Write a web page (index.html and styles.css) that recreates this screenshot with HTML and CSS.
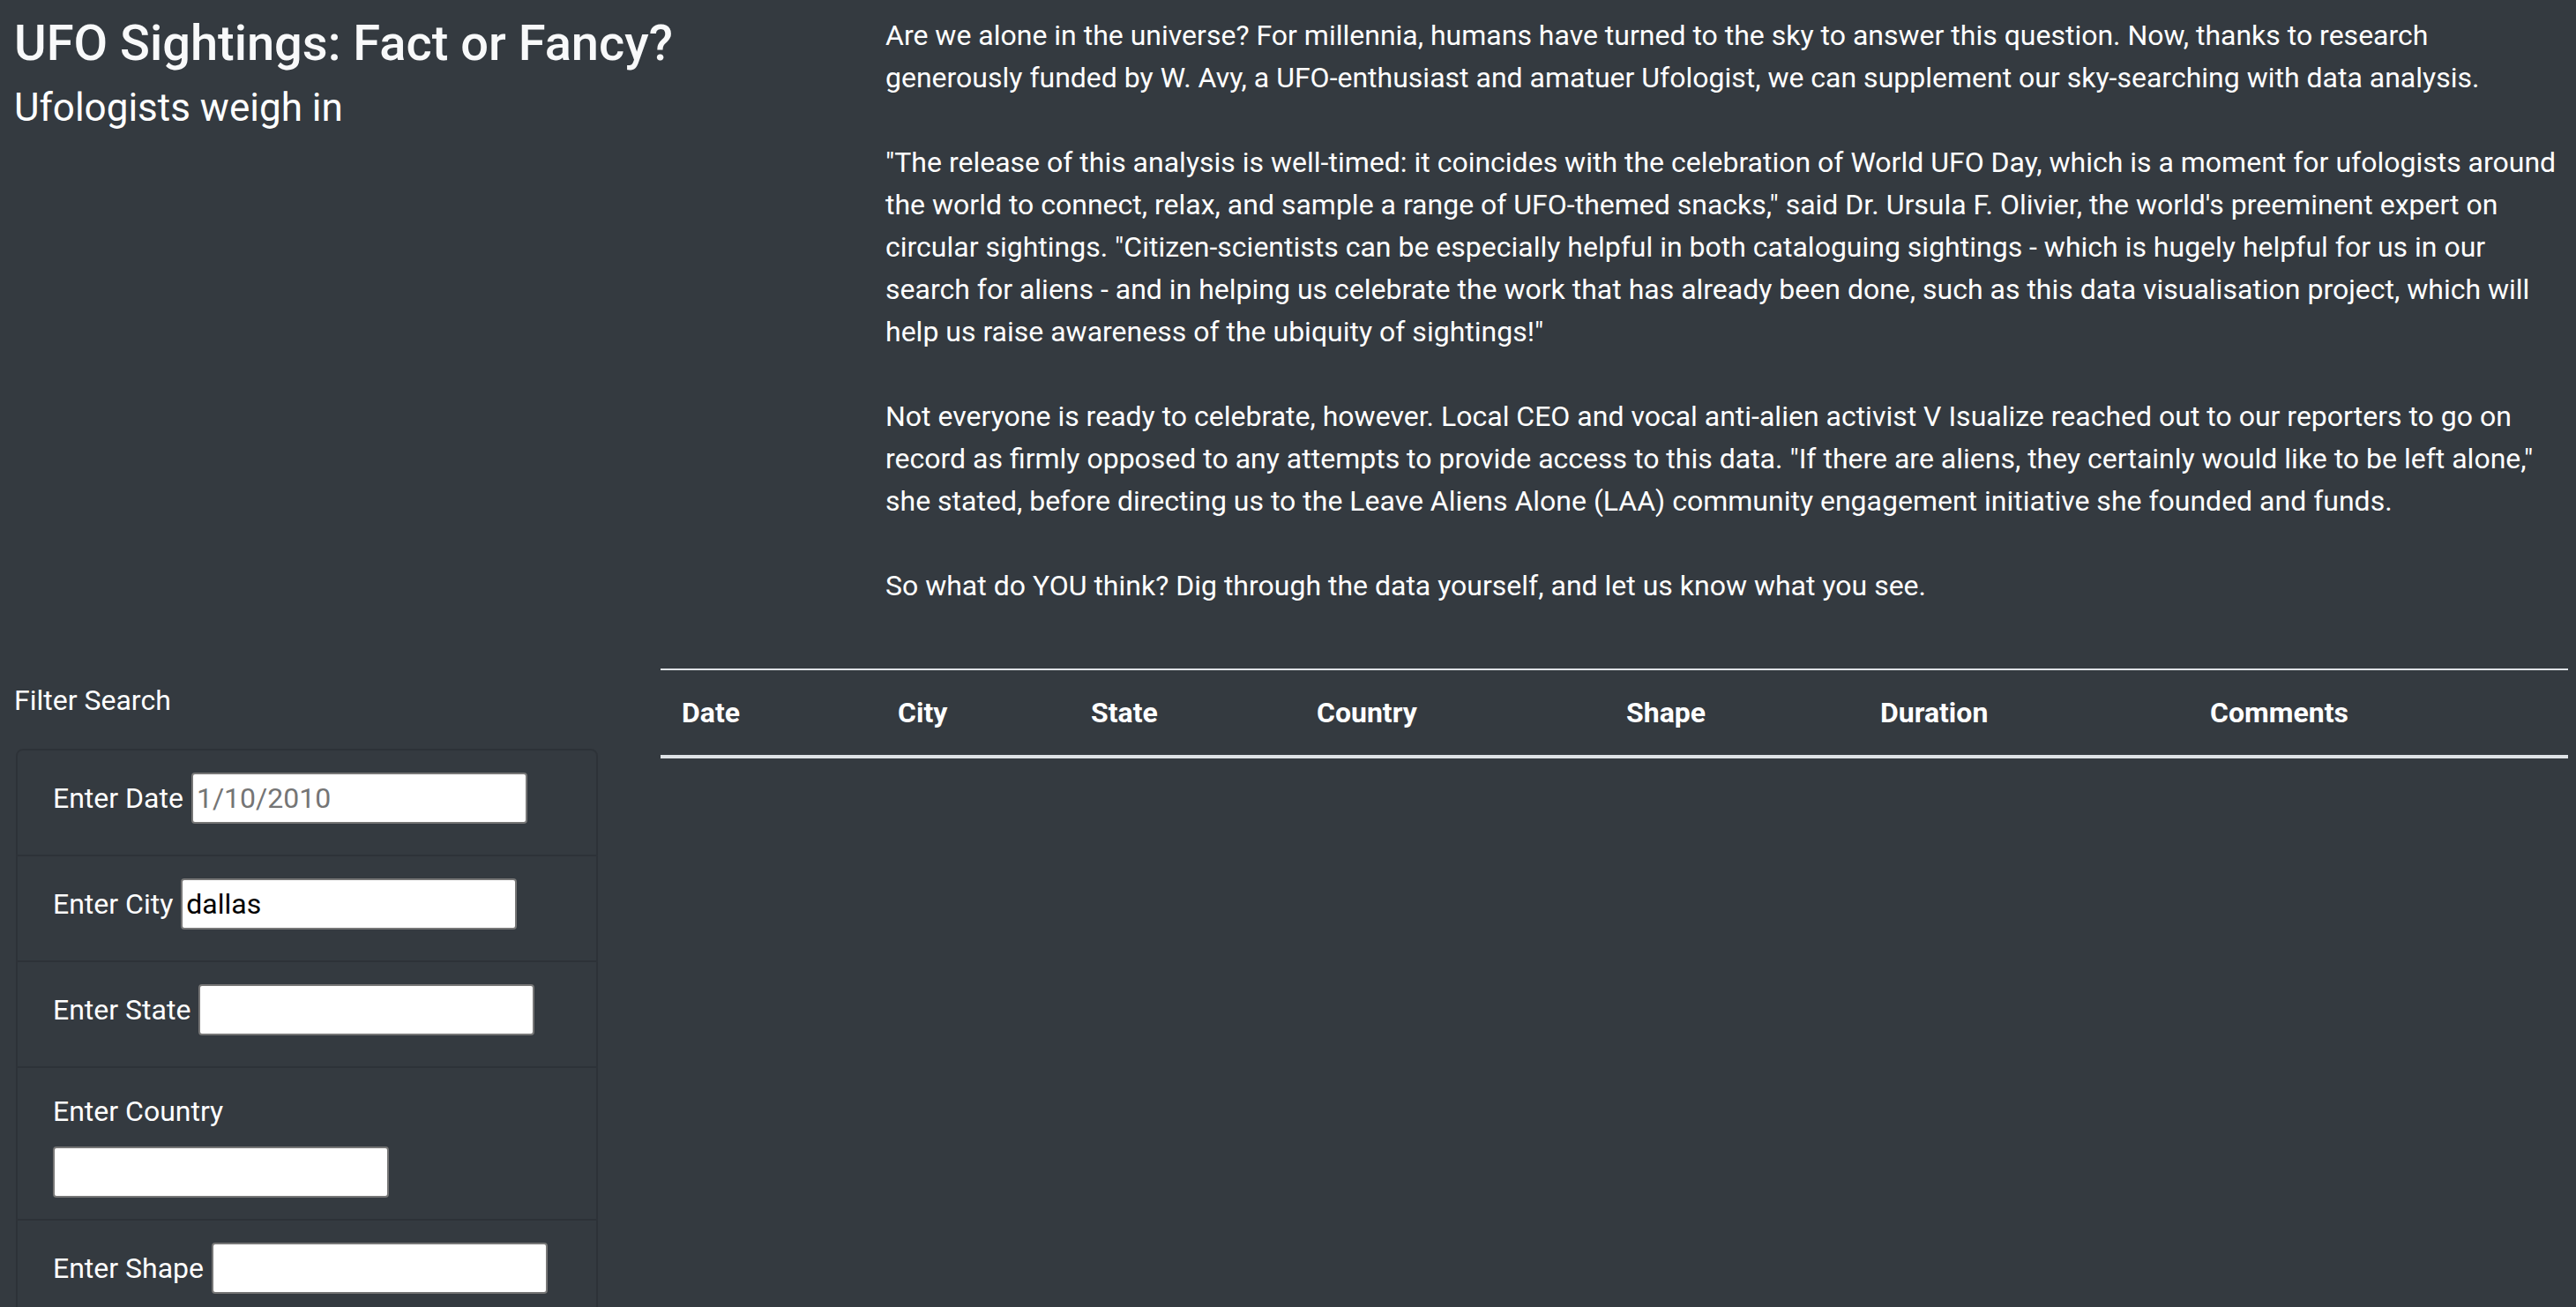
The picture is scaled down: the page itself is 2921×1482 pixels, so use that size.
FILE: index.html
```html
<!DOCTYPE html>
<html lang="en">
<head>
<meta charset="utf-8">
<title>UFO Sightings: Fact or Fancy?</title>
<link rel="stylesheet" href="styles.css">
</head>
<body>
  <header class="intro">
    <div class="intro-heading">
      <h1 class="title">UFO Sightings: Fact or Fancy?</h1>
      <h2 class="subtitle">Ufologists weigh in</h2>
    </div>
    <div class="intro-text">
      <p>Are we alone in the universe? For millennia, humans have turned to the sky to answer this question. Now, thanks to research generously funded by W. Avy, a UFO-enthusiast and amatuer Ufologist, we can supplement our sky-searching with data analysis.</p>
      <p>"The release of this analysis is well-timed: it coincides with the celebration of World UFO Day, which is a moment for ufologists around the world to connect, relax, and sample a range of UFO-themed snacks," said Dr. Ursula F. Olivier, the world's preeminent expert on circular sightings. "Citizen-scientists can be especially helpful in both cataloguing sightings - which is hugely helpful for us in our search for aliens - and in helping us celebrate the work that has already been done, such as this data visualisation project, which will help us raise awareness of the ubiquity of sightings!"</p>
      <p>Not everyone is ready to celebrate, however. Local CEO and vocal anti-alien activist V Isualize reached out to our reporters to go on record as firmly opposed to any attempts to provide access to this data. "If there are aliens, they certainly would like to be left alone," she stated, before directing us to the Leave Aliens Alone (LAA) community engagement initiative she founded and funds.</p>
      <p>So what do YOU think? Dig through the data yourself, and let us know what you see.</p>
    </div>
  </header>

  <main class="data-row">
    <aside class="filter-panel">
      <h3 class="filter-title">Filter Search</h3>
      <ul class="filters">
        <li class="filter-item">
          <label class="filter-label" for="datetime">Enter Date</label>
          <input class="filter-input" id="datetime" type="text" placeholder="1/10/2010">
        </li>
        <li class="filter-item">
          <label class="filter-label" for="city">Enter City</label>
          <input class="filter-input" id="city" type="text" value="dallas">
        </li>
        <li class="filter-item">
          <label class="filter-label" for="state">Enter State</label>
          <input class="filter-input" id="state" type="text">
        </li>
        <li class="filter-item stacked">
          <label class="filter-label" for="country">Enter Country</label>
          <input class="filter-input" id="country" type="text">
        </li>
        <li class="filter-item">
          <label class="filter-label" for="shape">Enter Shape</label>
          <input class="filter-input" id="shape" type="text">
        </li>
      </ul>
    </aside>

    <section class="table-panel">
      <table class="sightings">
        <thead>
          <tr>
            <th class="col-date">Date</th>
            <th class="col-city">City</th>
            <th class="col-state">State</th>
            <th class="col-country">Country</th>
            <th class="col-shape">Shape</th>
            <th class="col-duration">Duration</th>
            <th class="col-comments">Comments</th>
          </tr>
        </thead>
        <tbody></tbody>
      </table>
    </section>
  </main>
</body>
</html>
```

FILE: styles.css
```css
html, body {
  background: #343a40;
}

body {
  margin: 0;
  padding: 16px 9px 0 16px;
  color: #ffffff;
  font-family: Roboto, "Liberation Sans", Arial, sans-serif;
  font-size: 32px;
  line-height: 48px;
}

.intro {
  display: grid;
  grid-template-columns: 988px 1fr;
}

.intro-heading {
  min-width: 0;
}

.title {
  margin: 0 0 13px;
  font-size: 56px;
  font-weight: 500;
  line-height: 1.2;
  color: #f8f9fa;
}

.subtitle {
  margin: 0;
  font-size: 44px;
  font-weight: 400;
  line-height: 1.2;
  color: #ffffff;
}

.intro-text {
  padding-right: 7px;
}

.intro-text p {
  margin: 0 0 48px;
}

.intro-text p:last-child {
  margin-bottom: 0;
}

.data-row {
  display: grid;
  grid-template-columns: 662px 2163px;
  column-gap: 71px;
  margin-top: 70px;
  align-items: start;
}

.filter-title {
  margin: 12px 0 31px;
  font-size: 32px;
  font-weight: 400;
  line-height: 48px;
}

.filters {
  list-style: none;
  margin: 0 0 0 2px;
  padding: 0;
  width: 660px;
  box-sizing: border-box;
  border: 2px solid rgba(0, 0, 0, 0.125);
  border-radius: 8px;
}

.filter-item {
  display: flex;
  flex-wrap: wrap;
  align-items: baseline;
  column-gap: 9px;
  padding: 25px 40px 35px;
}

.filter-item + .filter-item {
  border-top: 2px solid rgba(0, 0, 0, 0.125);
}

.filter-item.stacked {
  flex-direction: column;
  align-items: flex-start;
  padding-bottom: 24px;
}

.filter-item.stacked .filter-input {
  margin-top: 16px;
}

.filter-label {
  color: #ffffff;
  white-space: nowrap;
}

.filter-input {
  width: 381px;
  height: 58px;
  box-sizing: border-box;
  margin: 0;
  padding: 2px 4px;
  border: 2px solid #767676;
  border-radius: 4px;
  background: #ffffff;
  color: #000000;
  font-family: Roboto, "Liberation Sans", Arial, sans-serif;
  font-size: 32px;
  line-height: normal;
}

.filter-input::placeholder {
  color: #757575;
}

.table-panel {
  min-width: 0;
}

.sightings {
  width: 2163px;
  table-layout: fixed;
  border-collapse: separate;
  border-spacing: 0;
}

.sightings th {
  box-sizing: border-box;
  padding: 24px;
  text-align: left;
  vertical-align: bottom;
  font-weight: 700;
  line-height: 48px;
  border-top: 2px solid #dee2e6;
  border-bottom: 4px solid #dee2e6;
}

.col-date { width: 245px; }
.col-city { width: 219px; }
.col-state { width: 256px; }
.col-country { width: 351px; }
.col-shape { width: 288px; }
.col-duration { width: 374px; }
.col-comments { width: 430px; }
```
